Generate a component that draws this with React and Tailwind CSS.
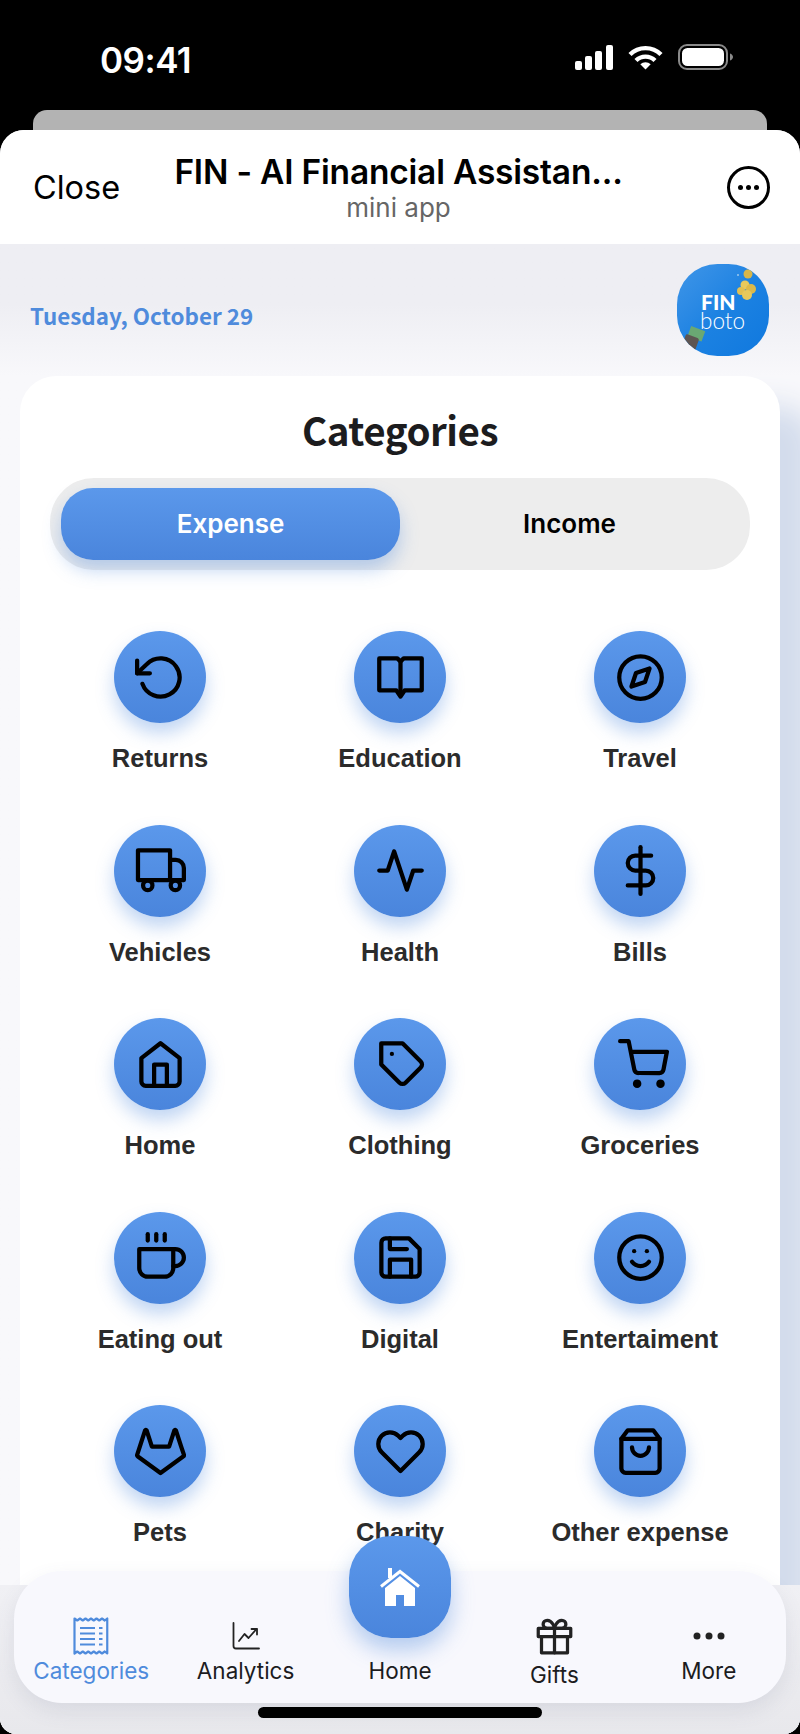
import React from 'react';
import {
    FiRotateCcw, FiCompass, FiActivity, FiDollarSign, FiHome, FiTag, FiShoppingCart,
    FiCoffee, FiSave, FiSmile, FiGitlab, FiHeart, FiShoppingBag, FiGift,
} from 'react-icons/fi';

const BookIcon = ({ size }) => (
    <svg width={size} height={size} viewBox="0 0 24 24" fill="none" stroke="currentColor" strokeWidth="2" strokeLinecap="round" strokeLinejoin="round">
        <path d="M2 3h8.500L12 4.500 13.500 3H22v15h-8l-2 3-2-3H2z" />
        <path d="M12 4.500V20" />
    </svg>
);

const TruckIcon = ({ size }) => (
    <svg width={size} height={size} viewBox="0 0 24 24" fill="none" stroke="currentColor" strokeWidth="2" strokeLinecap="round" strokeLinejoin="round">
        <path d="M1.400 2.500h15.100v14H1.400z" />
        <path d="M16.500 7h2.700A3.800 3.800 0 0 1 23 10.800v5.700h-6.500" />
        <circle cx="6" cy="19" r="2.200" />
        <circle cx="19" cy="19" r="2.200" />
    </svg>
);

const categories = [
    { label: 'Returns', Icon: FiRotateCcw },
    { label: 'Education', Icon: BookIcon },
    { label: 'Travel', Icon: FiCompass },
    { label: 'Vehicles', Icon: TruckIcon },
    { label: 'Health', Icon: FiActivity },
    { label: 'Bills', Icon: FiDollarSign },
    { label: 'Home', Icon: FiHome },
    { label: 'Clothing', Icon: FiTag, shift: 'translate-x-[2px]' },
    { label: 'Groceries', Icon: FiShoppingCart, shift: 'translate-x-[3px]' },
    { label: 'Eating out', Icon: FiCoffee },
    { label: 'Digital', Icon: FiSave },
    { label: 'Entertaiment', Icon: FiSmile },
    { label: 'Pets', Icon: FiGitlab },
    { label: 'Charity', Icon: FiHeart },
    { label: 'Other expense', Icon: FiShoppingBag },
];

const StatusIcons = () => (
    <div className="flex items-center gap-[15px]">
        <svg width="38" height="25" viewBox="0 0 38 25" fill="white">
            <rect x="0" y="16" width="7" height="9" rx="2" />
            <rect x="10" y="11" width="7" height="14" rx="2" />
            <rect x="20" y="6" width="7" height="19" rx="2" />
            <rect x="31" y="0" width="7" height="25" rx="2" />
        </svg>
        <svg width="35" height="25" viewBox="0 0 35 25" fill="none" stroke="white" strokeWidth="4.400">
            <path d="M2 9.500a22 22 0 0 1 31 0" />
            <path d="M8 15.500a13.500 13.500 0 0 1 19 0" />
            <path d="M17.500 24.500l-5.200-5.200a7.400 7.400 0 0 1 10.400 0z" fill="white" stroke="none" />
        </svg>
        <svg width="55" height="26" viewBox="0 0 55 26" fill="none">
            <rect x="1" y="1" width="48" height="24" rx="8" stroke="#8a8a8a" strokeWidth="2" />
            <rect x="4" y="4" width="42" height="18" rx="5.500" fill="white" />
            <path d="M52 9.500c1.800.6 3 2 3 3.500s-1.200 2.900-3 3.500z" fill="#8a8a8a" />
        </svg>
    </div>
);

const Logo = () => (
    <div className="relative w-[92px] h-[92px] shrink-0 rounded-[44%] overflow-hidden bg-gradient-to-br from-[#3f96e8] via-[#1c82e2] to-[#0f78de]">
        <svg className="absolute inset-0" width="92" height="92" viewBox="0 0 92 92">
            <circle cx="61" cy="11" r="1" fill="#9cc8ee" />
            <circle cx="71" cy="10" r="4.500" fill="#d9b648" />
            <circle cx="68" cy="21" r="4.500" fill="#e8c95c" />
            <circle cx="74" cy="25" r="5" fill="#dcb94a" />
            <circle cx="64" cy="27" r="4" fill="#e2c052" />
            <circle cx="70" cy="31" r="5" fill="#e8c95c" />
            <g transform="rotate(20 18 72)">
                <rect x="11" y="64" width="15" height="11" fill="#6aa873" />
                <rect x="9" y="73" width="14" height="16" rx="2" fill="#5d5552" />
            </g>
        </svg>
        <div className="absolute left-[24px] top-[28px] font-['Lato',sans-serif] font-black text-white text-[21px] leading-[20px]">FIN</div>
        <div className="absolute left-[23px] top-[49px] font-['Lato',sans-serif] font-light text-white text-[22.500px] leading-4">boto</div>
    </div>
);

const CategoryItem = ({ label, Icon, shift }) => (
    <div className="flex flex-col items-center">
        <div className="w-[92px] h-[92px] rounded-full flex items-center justify-center text-black bg-gradient-to-b from-[#5b98eb] to-[#4a85dc] shadow-[0_10px_18px_rgba(74,134,221,0.35)]">
            <Icon size={51} className={shift} />
        </div>
        <div className="mt-5 h-[30px] leading-[30px] text-[25.500px] font-bold text-[#2b2b2b] font-['Liberation_Sans',sans-serif] whitespace-nowrap">{label}</div>
    </div>
);

const ReceiptIcon = () => (
    <svg width="36" height="38" viewBox="0 0 36 38" fill="none" stroke="#4f8bdc" strokeWidth="2.200" strokeLinejoin="round">
        <path d="M1.500 1.500l2.750 2 2.750-2 2.750 2 2.750-2 2.750 2 2.750-2 2.750 2 2.750-2 2.750 2 2.750-2 2.750 2 2.500-2V36.500l-2.500-2-2.750 2-2.750-2-2.750 2-2.750-2-2.750 2-2.750-2-2.750 2-2.750-2-2.750 2-2.750-2-2.750 2z" />
        <path d="M7 11h15M7 16.500h15M7 22h15M7 27.500h15M26 11h3.500M26 16.500h3.500M26 22h3.500M26 27.500h3.500" />
    </svg>
);

const ChartIcon = () => (
    <svg width="28" height="28" viewBox="0 0 28 28" fill="none" stroke="#222" strokeWidth="1.800" strokeLinecap="round" strokeLinejoin="round">
        <path d="M1.500 1v23a2.500 2.500 0 0 0 2.500 2.500h23" />
        <path d="M7 19l5.500-7 4 4 8-9" />
        <path d="M19.500 7h5.500v5.500" />
    </svg>
);

const DotsIcon = () => (
    <svg width="32" height="8" viewBox="0 0 32 8" fill="#222">
        <circle cx="4" cy="4" r="3.500" />
        <circle cx="16" cy="4" r="3.500" />
        <circle cx="28" cy="4" r="3.500" />
    </svg>
);

const NavItem = ({ label, active, low, children }) => (
    <div className={`flex flex-col items-center justify-end ${low ? 'pb-[14px]' : 'pb-[18px]'}`}>
        <div className="h-[40px] flex items-center justify-center">{children}</div>
        <div className={`${low ? 'mt-[5px]' : 'mt-px'} h-[28px] leading-[28px] text-[22.500px] font-['Inter',sans-serif] whitespace-nowrap ${active ? 'text-[#4f8bdc]' : 'text-[#1c1c1e]'}`}>{label}</div>
    </div>
);

const App = () => {
    return (
        <div className="relative w-[800px] h-[1734px] bg-black overflow-hidden flex flex-col">
            {/* status bar */}
            <div className="h-[110px] shrink-0 pl-[100px] pr-[67px] pt-[44px] flex justify-between items-start">
                <span className="text-white text-[35px] leading-[32px] font-semibold font-['Inter',sans-serif] tracking-[-0.5px]">09:41</span>
                <StatusIcons />
            </div>
            <div className="h-5 shrink-0 mx-[33px] rounded-t-[14px] bg-[#b3b3b3]" />

            <div className="relative flex-1 flex flex-col rounded-t-[24px] rounded-b-[16px] overflow-hidden bg-[#f8f8fb]">
                {/* mini app header */}
                <div className="h-[114px] shrink-0 bg-white grid grid-cols-[1fr_auto_1fr] items-center pl-[33px] pr-[30px]">
                    <span className="mt-[3px] text-[32.500px] text-black font-['Inter',sans-serif]">Close</span>
                    <div className="flex flex-col items-center -ml-[6px]">
                        <span className="text-[33.500px] leading-[40px] font-semibold tracking-[-0.2px] text-black font-['Inter',sans-serif] whitespace-nowrap">FIN - AI Financial Assistan...</span>
                        <span className="mt-px text-[26px] leading-[30px] text-[#666] font-['Inter',sans-serif]">mini app</span>
                    </div>
                    <div className="justify-self-end w-[43px] h-[43px] rounded-full border-[3px] border-black flex items-center justify-center gap-[3px]">
                        <span className="w-[5px] h-[5px] rounded-full bg-black" />
                        <span className="w-[5px] h-[5px] rounded-full bg-black" />
                        <span className="w-[5px] h-[5px] rounded-full bg-black" />
                    </div>
                </div>

                <div className="flex-1 flex flex-col bg-gradient-to-b from-[#eeeef3] via-[#eeeef3] via-[60px] to-[#f8f8fb] to-[132px]">
                    <div className="h-[132px] shrink-0 pt-5 pl-[30px] pr-[31px] flex justify-between items-start">
                        <span className="mt-[33px] text-[22.400px] leading-[36px] font-semibold text-[#4f8bdc] font-['Noto_Sans_CJK_KR',sans-serif]">Tuesday, October 29</span>
                        <Logo />
                    </div>

                    <div className="mx-5 flex-1 rounded-t-[36px] bg-white shadow-[35px_30px_30px_0_#d3dcec]">
                        <h1 className="mt-[25px] h-[56px] leading-[56px] text-center text-[38.500px] font-bold text-[#1c1c1e] font-['Noto_Sans_CJK_KR',sans-serif] tracking-[-0.5px]">Categories</h1>

                        <div className="mt-[21px] mx-[30px] h-[92px] rounded-[44px] bg-[#ededed] flex px-[11px] py-[10px]">
                            <div className="flex-1 rounded-[32px] flex items-center justify-center pb-px bg-gradient-to-b from-[#5b98eb] to-[#4a85dc] shadow-[0_10px_18px_rgba(74,134,221,0.35)] text-white text-[26px] font-semibold font-['Inter',sans-serif]">Expense</div>
                            <div className="flex-1 flex items-center justify-center pb-px text-black text-[26px] font-semibold font-['Inter',sans-serif]">Income</div>
                        </div>

                        <div className="mt-[61px] px-5 grid grid-cols-3 gap-y-[51.500px]">
                            {categories.map((c) => (
                                <CategoryItem key={c.label} label={c.label} Icon={c.Icon} shift={c.shift} />
                            ))}
                        </div>
                    </div>
                </div>

                {/* bottom tab bar */}
                <div className="absolute inset-x-0 bottom-0 h-[149px] bg-gradient-to-b from-[#f0f0f4] to-[#e8e8ec]">
                    <div className="absolute left-[14px] right-[14px] top-[-14px] h-[132px] rounded-[48px] bg-[#f8f8fd] shadow-[0_8px_20px_rgba(90,100,130,0.12)] grid grid-cols-5">
                        <NavItem label="Categories" active><ReceiptIcon /></NavItem>
                        <NavItem label="Analytics"><ChartIcon /></NavItem>
                        <NavItem label="Home" />
                        <NavItem label="Gifts" low><FiGift size={39} color="#222" /></NavItem>
                        <NavItem label="More"><DotsIcon /></NavItem>
                    </div>
                    <div className="absolute left-[349px] top-[-49px] w-[102px] h-[102px] rounded-[42px] flex items-center justify-center bg-gradient-to-b from-[#5b98eb] to-[#4a85dc] shadow-[0_12px_22px_rgba(74,134,221,0.4)]">
                        <svg width="42" height="38" viewBox="0 0 42 38" fill="white">
                            <rect x="9" y="0" width="4" height="10" />
                            <path d="M2 18.500L21 3.500l19 15" fill="none" stroke="white" strokeWidth="3" />
                            <path d="M21 8l15 12v18H25V27h-8v11H6V20z" />
                        </svg>
                    </div>
                    <div className="absolute left-[258px] top-[122px] w-[284px] h-[11px] rounded-full bg-black" />
                </div>
            </div>
        </div>
    );
};

export default App;
